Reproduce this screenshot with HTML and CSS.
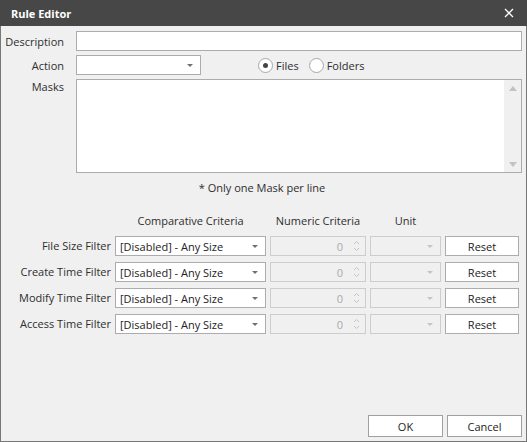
FILE: index.html
```html
<!DOCTYPE html>
<html lang="en">
<head>
  <meta charset="UTF-8">
  <title>Rule Editor</title>
  <link rel="stylesheet" href="styles.css">
</head>
<body>
<div class="window">
  <div class="titlebar">
    <span class="title">Rule Editor</span>
    <svg class="close" width="10" height="10" viewBox="0 0 10 10">
      <path d="M1 1 L9 9 M9 1 L1 9" stroke="#fff" stroke-width="1.3" fill="none"/>
    </svg>
  </div>

  <div class="content">
    <div class="form">
      <label class="lbl">Description</label>
      <input class="field" type="text">

      <label class="lbl">Action</label>
      <div class="action-row">
        <div class="combo action-combo">
          <span class="combo-text"></span>
          <svg class="arrow" width="6" height="3" viewBox="0 0 6 3"><path d="M0 0 H6 L3 3 Z" fill="#707070"/></svg>
        </div>
        <div class="radios">
          <label class="radio"><span class="dot checked"></span>Files</label>
          <label class="radio"><span class="dot"></span>Folders</label>
        </div>
      </div>

      <label class="lbl lbl-top">Masks</label>
      <div class="memo">
        <div class="memo-area"></div>
        <div class="scrollbar">
          <svg width="8" height="5" viewBox="0 0 8 5"><path d="M0 5 L4 0 L8 5 Z" fill="#c2c2c2"/></svg>
          <svg width="8" height="5" viewBox="0 0 8 5"><path d="M0 0 L8 0 L4 5 Z" fill="#c2c2c2"/></svg>
        </div>
      </div>
    </div>

    <div class="note">* Only one Mask per line</div>

    <div class="filters">
      <div></div>
      <div class="head">Comparative Criteria</div>
      <div class="head">Numeric Criteria</div>
      <div class="head">Unit</div>
      <div></div>

      <div class="lbl">File Size Filter</div>
      <div class="combo"><span class="combo-text">[Disabled] - Any Size</span><svg class="arrow" width="6" height="3" viewBox="0 0 6 3"><path d="M0 0 H6 L3 3 Z" fill="#707070"/></svg></div>
      <div class="spin"><span>0</span><svg width="7" height="12" viewBox="0 0 7 12"><path d="M1 4 L3.5 1.5 L6 4 M1 8 L3.5 10.5 L6 8" stroke="#c4c4c4" fill="none"/></svg></div>
      <div class="combo disabled"><span class="combo-text"></span><svg class="arrow" width="6" height="3" viewBox="0 0 6 3"><path d="M0 0 H6 L3 3 Z" fill="#c4c4c4"/></svg></div>
      <button class="btn">Reset</button>

      <div class="lbl">Create Time Filter</div>
      <div class="combo"><span class="combo-text">[Disabled] - Any Size</span><svg class="arrow" width="6" height="3" viewBox="0 0 6 3"><path d="M0 0 H6 L3 3 Z" fill="#707070"/></svg></div>
      <div class="spin"><span>0</span><svg width="7" height="12" viewBox="0 0 7 12"><path d="M1 4 L3.5 1.5 L6 4 M1 8 L3.5 10.5 L6 8" stroke="#c4c4c4" fill="none"/></svg></div>
      <div class="combo disabled"><span class="combo-text"></span><svg class="arrow" width="6" height="3" viewBox="0 0 6 3"><path d="M0 0 H6 L3 3 Z" fill="#c4c4c4"/></svg></div>
      <button class="btn">Reset</button>

      <div class="lbl">Modify Time Filter</div>
      <div class="combo"><span class="combo-text">[Disabled] - Any Size</span><svg class="arrow" width="6" height="3" viewBox="0 0 6 3"><path d="M0 0 H6 L3 3 Z" fill="#707070"/></svg></div>
      <div class="spin"><span>0</span><svg width="7" height="12" viewBox="0 0 7 12"><path d="M1 4 L3.5 1.5 L6 4 M1 8 L3.5 10.5 L6 8" stroke="#c4c4c4" fill="none"/></svg></div>
      <div class="combo disabled"><span class="combo-text"></span><svg class="arrow" width="6" height="3" viewBox="0 0 6 3"><path d="M0 0 H6 L3 3 Z" fill="#c4c4c4"/></svg></div>
      <button class="btn">Reset</button>

      <div class="lbl">Access Time Filter</div>
      <div class="combo"><span class="combo-text">[Disabled] - Any Size</span><svg class="arrow" width="6" height="3" viewBox="0 0 6 3"><path d="M0 0 H6 L3 3 Z" fill="#707070"/></svg></div>
      <div class="spin"><span>0</span><svg width="7" height="12" viewBox="0 0 7 12"><path d="M1 4 L3.5 1.5 L6 4 M1 8 L3.5 10.5 L6 8" stroke="#c4c4c4" fill="none"/></svg></div>
      <div class="combo disabled"><span class="combo-text"></span><svg class="arrow" width="6" height="3" viewBox="0 0 6 3"><path d="M0 0 H6 L3 3 Z" fill="#c4c4c4"/></svg></div>
      <button class="btn">Reset</button>
    </div>

    <div class="footer">
      <button class="btn btn-lg">OK</button>
      <button class="btn btn-lg">Cancel</button>
    </div>
  </div>
</div>
</body>
</html>
```

FILE: styles.css
```css
body {
  margin: 0;
  font-family: "Open Sans", "Noto Sans", sans-serif;
  font-size: 11px;
  color: #2e2e2e;
  background-color: #f0f0f0;
}

.window {
  width: 527px;
  height: 442px;
  box-sizing: border-box;
  border: 1px solid #777;
  border-top: none;
  background-color: #f0f0f0;
  display: flex;
  flex-direction: column;
}

.titlebar {
  height: 26px;
  margin: 0 -1px;
  background-color: #474747;
  color: #fff;
  display: flex;
  align-items: center;
  justify-content: space-between;
  padding: 0 13px 0 11px;
}

.title {
  font-weight: bold;
  font-size: 11px;
}

.content {
  flex: 1;
  display: flex;
  flex-direction: column;
  padding: 5px 4px 4px 0;
}

.form {
  display: grid;
  grid-template-columns: 63px 1fr;
  column-gap: 12px;
  row-gap: 4px;
}

.lbl {
  text-align: right;
  align-self: center;
  white-space: nowrap;
}

.lbl-top {
  align-self: start;
  padding-top: 0;
}

.field {
  height: 20px;
  box-sizing: border-box;
  border: 1px solid #acacac;
  background: #fff;
  margin: 0;
  padding: 0 4px;
  font: inherit;
}

.action-row {
  display: flex;
  align-items: center;
}

.combo {
  height: 20px;
  box-sizing: border-box;
  border: 1px solid #acacac;
  background: #fff;
  display: flex;
  align-items: center;
  justify-content: space-between;
  padding: 0 7px 0 4px;
  color: #222;
  white-space: nowrap;
}

.combo.disabled {
  background: #f0f0f0;
  border-color: #cdcdcd;
}

.action-combo {
  width: 125px;
}

.radios {
  display: flex;
  align-items: center;
  margin-left: 57px;
  gap: 10px;
}

.radio {
  display: flex;
  align-items: center;
  gap: 3px;
}

.dot {
  width: 15px;
  height: 15px;
  box-sizing: border-box;
  border: 1px solid #a8a8a8;
  border-radius: 50%;
  background: #fff;
  position: relative;
}

.dot.checked::after {
  content: "";
  position: absolute;
  left: 4px;
  top: 4px;
  width: 5px;
  height: 5px;
  border-radius: 50%;
  background: #444;
}

.memo {
  height: 94px;
  box-sizing: border-box;
  border: 1px solid #acacac;
  background: #fff;
  display: flex;
}

.memo-area {
  flex: 1;
}

.scrollbar {
  width: 17px;
  background: #f0f0f0;
  display: flex;
  flex-direction: column;
  justify-content: space-between;
  align-items: center;
  padding: 6px 0 5px;
}

.note {
  text-align: center;
  margin-top: 7px;
  line-height: 16px;
  padding-left: 1px;
}

.filters {
  display: grid;
  grid-template-columns: 110px 151px 96px 71px 74px;
  grid-template-rows: 17px repeat(4, 20px);
  column-gap: 4px;
  row-gap: 6px;
  margin-top: 17px;
}

.filters .lbl {
  line-height: 20px;
}

.head {
  text-align: center;
  line-height: 16px;
  align-self: start;
}

.spin {
  height: 20px;
  box-sizing: border-box;
  border: 1px solid #cdcdcd;
  background: #f0f0f0;
  color: #aaa;
  display: flex;
  align-items: center;
  justify-content: flex-end;
  gap: 10px;
  padding-right: 5px;
}

.btn {
  height: 20px;
  box-sizing: border-box;
  border: 1px solid #acacac;
  background: #fff;
  font: inherit;
  color: #222;
  margin: 0;
  padding: 0;
}

.footer {
  margin-top: auto;
  display: flex;
  justify-content: flex-end;
  gap: 4px;
}

.btn-lg {
  width: 75px;
  height: 22px;
  border-color: #a0a0a0;
}
```
